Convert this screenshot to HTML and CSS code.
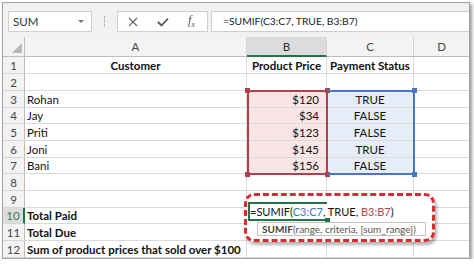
FILE: index.html
```html
<!DOCTYPE html>
<html>
  <head>
    <meta charset="utf-8">
    <title>SUMIF example</title>
    <link rel="stylesheet" href="styles.css">
  </head>
  <body>
    <div class="frame">
      <div class="toolbar">
        <div class="namebox">
          <span>SUM</span>
          <span class="drop"></span>
        </div>
        <div class="grip"><span></span></div>
        <div class="fnbuttons">
          <svg width="10" height="10" viewBox="0 0 10 10"><path d="M1 1 L9 9 M9 1 L1 9" stroke="#6a6a6a" stroke-width="1.2" fill="none"/></svg>
          <svg width="12" height="10" viewBox="0 0 12 10"><path d="M1 5 L4.5 8.5 L11 1.5" stroke="#555" stroke-width="1.8" fill="none"/></svg>
          <span class="fx"><i>f</i><sub>x</sub></span>
        </div>
        <div class="formulabar">=SUMIF(C3:C7, TRUE, B3:B7)</div>
      </div>

      <div class="sheet">
        <div class="corner"><span class="tri"></span></div>
        <div class="colhead">A</div>
        <div class="colhead selected">B</div>
        <div class="colhead">C</div>
        <div class="colhead last">D</div>

        <div class="rowhead">1</div>
        <div class="cell bold center">Customer</div>
        <div class="cell bold center">Product Price</div>
        <div class="cell bold center">Payment Status</div>
        <div class="cell last"></div>

        <div class="rowhead">2</div>
        <div class="cell"></div>
        <div class="cell"></div>
        <div class="cell"></div>
        <div class="cell last"></div>

        <div class="rowhead">3</div>
        <div class="cell">Rohan</div>
        <div class="cell right pink">$120</div>
        <div class="cell center blue">TRUE</div>
        <div class="cell last"></div>

        <div class="rowhead">4</div>
        <div class="cell">Jay</div>
        <div class="cell right pink">$34</div>
        <div class="cell center blue">FALSE</div>
        <div class="cell last"></div>

        <div class="rowhead">5</div>
        <div class="cell">Priti</div>
        <div class="cell right pink">$123</div>
        <div class="cell center blue">FALSE</div>
        <div class="cell last"></div>

        <div class="rowhead">6</div>
        <div class="cell">Joni</div>
        <div class="cell right pink">$145</div>
        <div class="cell center blue">TRUE</div>
        <div class="cell last"></div>

        <div class="rowhead">7</div>
        <div class="cell">Bani</div>
        <div class="cell right pink">$156</div>
        <div class="cell center blue">FALSE</div>
        <div class="cell last"></div>

        <div class="rowhead">8</div>
        <div class="cell"></div>
        <div class="cell"></div>
        <div class="cell"></div>
        <div class="cell last"></div>

        <div class="rowhead">9</div>
        <div class="cell"></div>
        <div class="cell"></div>
        <div class="cell"></div>
        <div class="cell last"></div>

        <div class="rowhead selected">10</div>
        <div class="cell bold">Total Paid</div>
        <div class="cell"></div>
        <div class="cell"></div>
        <div class="cell last"></div>

        <div class="rowhead">11</div>
        <div class="cell bold">Total Due</div>
        <div class="cell"></div>
        <div class="cell"></div>
        <div class="cell last"></div>

        <div class="rowhead">12</div>
        <div class="cell bold">Sum of product prices that sold over $100</div>
        <div class="cell"></div>
        <div class="cell"></div>
        <div class="cell last"></div>

        <!-- range highlights shown while editing the formula -->
        <div class="range red-range">
          <span class="knob tl"></span><span class="knob tr"></span>
          <span class="knob bl"></span><span class="knob br"></span>
        </div>
        <div class="range blue-range">
          <span class="knob tr"></span><span class="knob br"></span>
        </div>

        <!-- callout around the cell being edited -->
        <div class="callout">
          <div class="active"><span class="handle"></span></div>
          <div class="editing">=SUMIF(<span class="ref-blue">C3:C7</span>, TRUE, <span class="ref-red">B3:B7</span>)</div>
          <div class="tip"><b>SUMIF</b>(range, criteria, [sum_range])</div>
        </div>
      </div>
    </div>
  </body>
</html>
```

FILE: styles.css
```css
body {
  margin: 0;
  background: #fff;
  font-family: Lato, "Open Sans", sans-serif;
}
.frame {
  margin: 2px 0 0 2px;
  width: 468px;
  height: 257px;
  box-sizing: border-box;
  border: 1px solid #a3a3a3;
  box-shadow: 2px 2px 3px rgba(0, 0, 0, 0.4);
  overflow: hidden;
}

/* formula bar */
.toolbar {
  height: 34px;
  background: #f1f1f1;
  display: flex;
  align-items: flex-start;
  padding: 8px 0 0 5px;
  box-sizing: border-box;
}
.namebox {
  width: 84px;
  height: 21px;
  box-sizing: border-box;
  background: #fff;
  border: 1px solid #cfcfcf;
  display: flex;
  align-items: center;
  justify-content: space-between;
  padding: 0 7px 0 4px;
  font-size: 11.5px;
  color: #333;
}
.drop {
  width: 0;
  height: 0;
  border-left: 3px solid transparent;
  border-right: 3px solid transparent;
  border-top: 3px solid #777;
}
.grip {
  width: 25px;
  height: 21px;
  display: flex;
  justify-content: center;
  align-items: center;
}
.grip span {
  width: 0;
  height: 11px;
  border-left: 1px dotted #9a9a9a;
}
.fnbuttons {
  width: 91px;
  height: 21px;
  box-sizing: border-box;
  background: #fff;
  border: 1px solid #cfcfcf;
  display: flex;
  align-items: center;
  gap: 19px;
  padding-left: 10px;
}
.fx {
  font-family: "Liberation Serif", serif;
  font-size: 12px;
  color: #555;
  line-height: 1;
}
.fx sub {
  font-size: 8px;
  font-style: italic;
}
.formulabar {
  flex: 1;
  height: 21px;
  box-sizing: border-box;
  margin-left: 3px;
  background: #fff;
  border: 1px solid #cfcfcf;
  border-right: none;
  padding-left: 11px;
  font-size: 10.3px;
  line-height: 19px;
  color: #222;
  white-space: nowrap;
}

/* grid */
.sheet {
  position: relative;
  display: grid;
  grid-template-columns: 22px 222px 80px 87px 55px;
  grid-template-rows: 20px 17px 17px 17px 16px 17px 17px 16px 17px 17px 16px 17px 17px;
  font-size: 11.5px;
  color: #111;
}
.corner, .colhead, .rowhead, .cell {
  box-sizing: border-box;
  display: flex;
  align-items: center;
  white-space: nowrap;
}
.corner, .colhead {
  background: #f3f3f3;
  border-right: 1px solid #d2d2d2;
  border-bottom: 1px solid #bdbdbd;
  justify-content: center;
  color: #444;
  font-size: 11.5px;
}
.corner {
  position: relative;
  border-right-color: #bdbdbd;
}
.tri {
  position: absolute;
  right: 2px;
  bottom: 3px;
  width: 0;
  height: 0;
  border-left: 10px solid transparent;
  border-bottom: 10px solid #b9b9b9;
}
.colhead.selected {
  background: #dcdcdc;
  border-bottom: 2px solid #217346;
  color: #333;
}
.rowhead {
  background: #f3f3f3;
  border-right: 1px solid #bdbdbd;
  border-bottom: 1px solid #d6d6d6;
  justify-content: center;
  color: #444;
  font-size: 11.5px;
}
.rowhead.selected {
  background: #dcdcdc;
  color: #3b7a57;
  border-right: 2px solid #217346;
}
.cell {
  border-right: 1px solid #dadada;
  border-bottom: 1px solid #dadada;
  padding: 0 2px;
}
.last {
  border-right: none;
}
.bold {
  font-weight: bold;
}
.center {
  justify-content: center;
}
.right {
  justify-content: flex-end;
  padding-right: 7px;
}
.pink {
  background: #f9e4e6;
}
.blue {
  background: #e6edf8;
}

/* reference ranges */
.range {
  position: absolute;
  top: 53px;
  height: 85px;
  box-sizing: border-box;
}
.red-range {
  left: 244px;
  width: 81px;
  border: 2px solid #aa434d;
}
.blue-range {
  left: 325px;
  width: 87px;
  border: 2px solid #4a74c4;
  border-left: none;
}
.knob {
  position: absolute;
  width: 5px;
  height: 5px;
}
.red-range .knob { background: #aa434d; }
.blue-range .knob { background: #4a74c4; }
.tl { left: -4px; top: -4px; }
.tr { right: -4px; top: -4px; }
.bl { left: -4px; bottom: -4px; }
.br { right: -4px; bottom: -4px; }

/* annotation */
.callout {
  position: absolute;
  left: 241px;
  top: 156px;
  width: 191px;
  height: 49px;
  box-sizing: border-box;
  border: 3px dashed #d92b2f;
  border-radius: 10px;
  background: #fff;
  box-shadow: 2px 3px 3px rgba(0, 0, 0, 0.3);
}
.active {
  position: absolute;
  left: 1px;
  top: 6px;
  width: 79px;
  height: 19px;
  box-sizing: border-box;
  border-top: 2px solid #217346;
  border-left: 2px solid #217346;
  border-bottom: 2px solid #217346;
}
.handle {
  position: absolute;
  right: -3px;
  bottom: -4px;
  width: 5px;
  height: 5px;
  background: #217346;
}
.editing {
  position: absolute;
  left: 3px;
  top: 8px;
  font-size: 11px;
  line-height: 16px;
  color: #111;
  white-space: nowrap;
}
.ref-blue { color: #4472c4; }
.ref-red { color: #b0474f; }
.tip {
  position: absolute;
  left: 10px;
  top: 26px;
  width: 169px;
  height: 14px;
  box-sizing: border-box;
  border: 1px solid #c4c4c4;
  background: #fff;
  padding-left: 4px;
  font-size: 10px;
  line-height: 12px;
  color: #555;
  white-space: nowrap;
}
.tip b {
  color: #444;
}
```
